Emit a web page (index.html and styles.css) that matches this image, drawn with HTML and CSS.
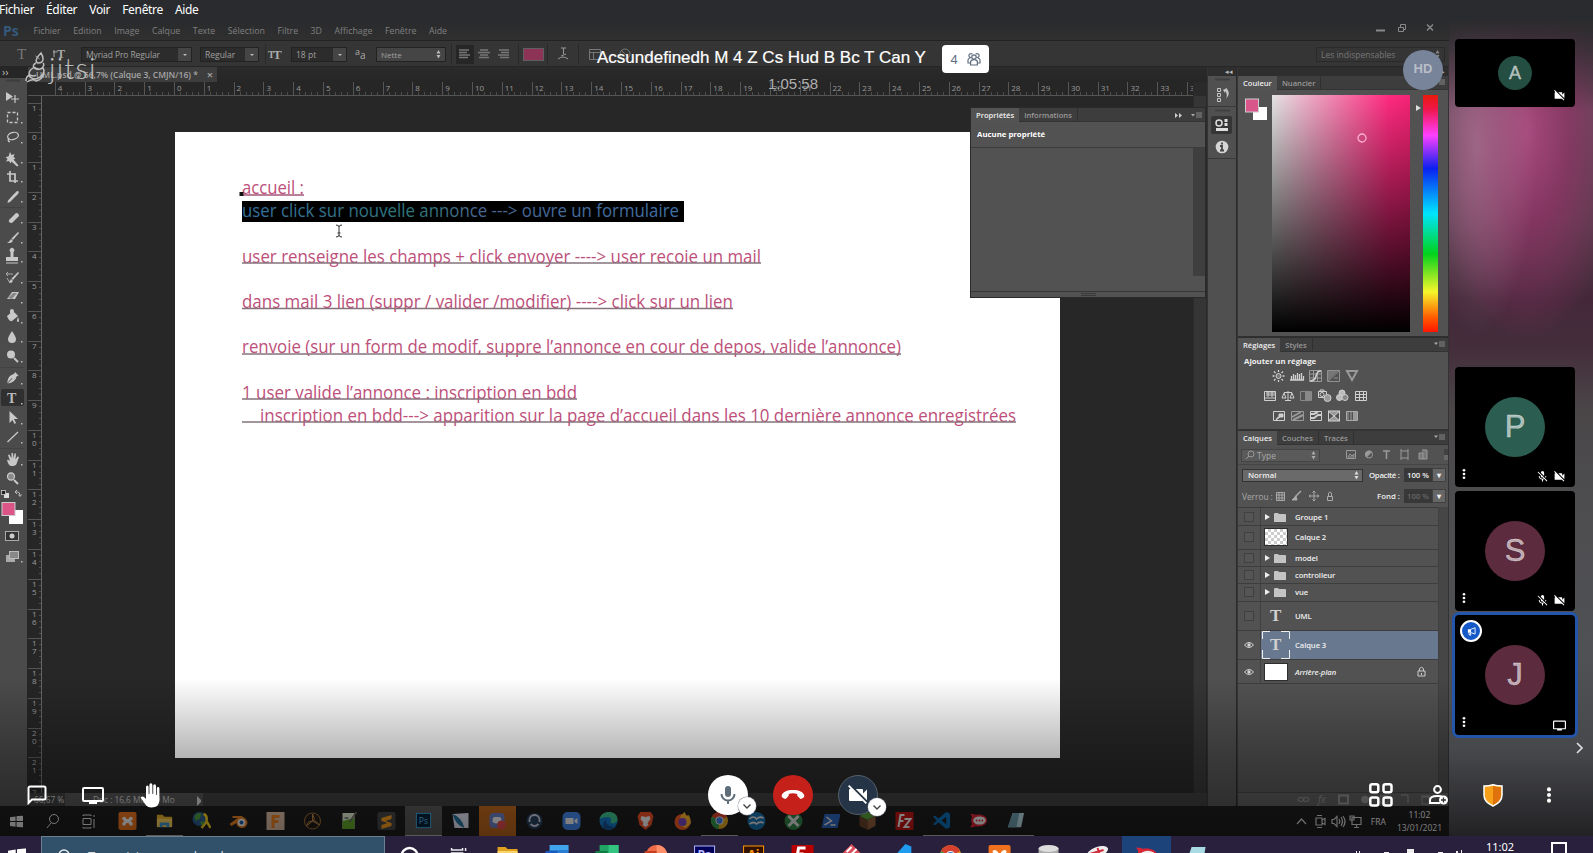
FILE: index.html
```html
<!DOCTYPE html>
<html lang="fr">
<head>
<meta charset="utf-8">
<title>Réunion</title>
<link rel="stylesheet" href="styles.css">
</head>
<body>
<svg class="defs" width="0" height="0">
  <symbol id="camoff" viewBox="0 0 24 24"><path d="M3.3 2 2 3.3 4.7 6H4a1 1 0 0 0-1 1v10a1 1 0 0 0 1 1h12c.2 0 .4-.1.500-.2l3.200 3.200 1.300-1.300zM21 6.500l-4 4V7a1 1 0 0 0-1-1H9.800L21 17.200z"/></symbol>
  <symbol id="micoff" viewBox="0 0 24 24"><path d="M19 11h-1.700c0 .7-.2 1.400-.4 2l1.200 1.200c.6-1 .9-2 .9-3.200zm-4 .2V5a3 3 0 0 0-6 0v.2zM4.300 3 3 4.300l6 6V11a3 3 0 0 0 3.700 2.900l1.600 1.600c-.7.400-1.500.6-2.300.6-2.800 0-5.300-2.100-5.300-5.100H5c0 3.400 2.700 6.200 6 6.700V21h2v-3.300c.9-.1 1.800-.4 2.500-.9l4.200 4.200 1.300-1.300z"/></symbol>
  <symbol id="dots" viewBox="0 0 24 24"><circle cx="12" cy="4.500" r="2.700"/><circle cx="12" cy="12" r="2.700"/><circle cx="12" cy="19.500" r="2.700"/></symbol>
  <symbol id="screen" viewBox="0 0 22 17"><path fill-rule="evenodd" d="M2 0h18a2 2 0 0 1 2 2v11a2 2 0 0 1-2 2h-5v2H7v-2H2a2 2 0 0 1-2-2V2a2 2 0 0 1 2-2zm0 2v11h18V2z"/></symbol>
  <symbol id="down" viewBox="0 0 18 18"><path d="M5.500 7.500 9 11l3.500-3.500" fill="none" stroke="#444" stroke-width="1.400"/></symbol>
  <symbol id="folder" viewBox="0 0 12 10"><path fill="#c4c4c4" d="M0 2a1 1 0 0 1 1-1h3l1 1h6a1 1 0 0 1 1 1v7H0z"/></symbol>
  <symbol id="win" viewBox="0 0 14 13"><path d="M0 2l6-1v5H0zM7 .8 14 0v6H7zM0 7h6v5.200L0 11.300zM7 7h7v6.200L7 12.200z"/></symbol>
  <symbol id="eye" viewBox="0 0 10 8"><path fill="none" stroke="#d5d5d5" d="M.5 4q4.500-5 9 0-4.500 5-9 0z"/><circle cx="5" cy="4" r="1.700" fill="#d5d5d5"/></symbol>
  <symbol id="menu" viewBox="0 0 11 7"><path d="M0 1.500h4L2 4z" fill="#aaa"/><path d="M5 1h6M5 3h6M5 5h6" stroke="#888"/></symbol>
  <symbol id="spin" viewBox="0 0 5 9"><path d="M2.500 0 4.500 3.500h-4zM2.500 8.500.5 5h4z"/></symbol>
  <symbol id="vsc" viewBox="0 0 20 20"><path fill="#0d6db5" d="M15 1l4 2v14l-4 2-8-7-4 3-2-1 4-4-4-4 2-1 4 3zM15 6l-5 4 5 4z"/></symbol>
  <symbol id="rocket" viewBox="0 0 20 20"><path fill="#d92536" d="M1 3c3 0 5 1 6 1 7-1 12 2 12 6s-5 7-12 6c-1 1-3 1-6 1 2-2 2-3 2-4-1-2-1-4 0-6 0-1 0-2-2-4z"/><ellipse cx="11" cy="10" rx="6.500" ry="4.300" fill="#eee"/><g fill="#d92536"><circle cx="8" cy="10" r="1"/><circle cx="11" cy="10" r="1"/><circle cx="14" cy="10" r="1"/></g></symbol>
  <symbol id="chrome" viewBox="0 0 20 20"><circle cx="10" cy="10" r="9" fill="#d9a322"/><path d="M10 10 2 6a9 9 0 0 1 16 0z" fill="#d6402f"/><path d="M10 10 2 6a9 9 0 0 0 7 13z" fill="#32964b"/><circle cx="10" cy="10" r="4.200" fill="#eee"/><circle cx="10" cy="10" r="3.300" fill="#3b7be0"/></symbol>
</svg>

<nav class="sysmenu"><span>Fichier</span><span>Éditer</span><span>Voir</span><span>Fenêtre</span><span>Aide</span></nav>

<main class="meeting">
<section class="share">
  <div class="ps-menu"><b>Ps</b><span>Fichier</span><span>Edition</span><span>Image</span><span>Calque</span><span>Texte</span><span>Sélection</span><span>Filtre</span><span>3D</span><span>Affichage</span><span>Fenêtre</span><span>Aide</span>
    <svg class="winbtns" width="76" height="14"><g fill="none" stroke="#888"><path d="M3 9.500h9" stroke-width="2"/><path d="M25.500 6.500h5v4h-5zM27.500 6V3.500h5v5H31"/><path d="M54 3.500l6 6M60 3.500l-6 6" stroke-width="1.500"/></g></svg>
  </div>
  <div class="ps-options">
    <svg class="ot" width="78" height="26"><g fill="#777" font-family="Liberation Serif, serif"><text x="17" y="18" font-size="15">T</text><text x="57" y="17" font-size="12" fill="#aaa" font-weight="bold">T</text></g><path d="M35.500 15l4 3M54 9v7m-1-5h4" stroke="#aaa"/></svg>
    <div class="field f1">Myriad Pro Regular<i></i></div>
    <div class="field f2">Regular<i></i></div>
    <svg width="32" height="26"><text x="9" y="17" font-size="10" fill="#aaa" font-weight="bold" font-family="Liberation Serif, serif">T</text><text x="14" y="18" font-size="13" fill="#aaa" font-weight="bold" font-family="Liberation Serif, serif">T</text><path d="M6.500 3v20" stroke="#2a2a2a"/></svg>
    <div class="field f3">18 pt<i></i></div>
    <svg width="29" height="26"><text x="8" y="14" font-size="9" fill="#aaa">a</text><text x="13" y="18" font-size="10" fill="#aaa">a</text></svg>
    <div class="field f4">Nette<svg width="5" height="9" fill="#bbb"><use href="#spin"/></svg></div>
    <svg class="aligns" width="270" height="26"><path d="M5.500 2v22M72.500 2v22M101.500 2v22M132.500 2v22" stroke="#292929"/><rect x="10" y="4" width="18" height="19" fill="#262626"/><g stroke="#777" stroke-width="1.300"><path d="M13 9h10M13 11.500h8M13 14h11M13 16.500h9M34 9h8M32 11.500h12M34 14h8M33 16.500h10M53 9h10M55 11.500h8M52 14h11M54 16.500h9"/></g><rect x="77.500" y="7.500" width="20" height="12" fill="#8d3355" stroke="#5f5f5f"/><g fill="none" stroke="#999"><path d="M112 18q5-4 10 0M115 7h5M117.500 7v6M115 15l5-2"/><path d="M143.500 8.500h11v10h-11zM143 11.500h12M147.500 11v7" stroke="#777"/><circle cx="179" cy="13" r="5" stroke="#777"/><path d="M175 9l8 8M198 14l3 3 6-8" stroke="#777"/></g></svg>
    <div class="field f5">Les indispensables<svg width="5" height="9" fill="#888"><use href="#spin"/></svg></div>
  </div>

  <div class="ps-main">
    <aside class="tools">
      <div class="grip">››</div>
      <svg width="27" height="493" viewBox="0 78 27 493">
        <path d="M6 80.500h14" stroke="#3d3d3d" stroke-width="2"/>
        <path d="M1 207.500h23M1 367.500h23M1 448.500h23" stroke="#424242"/>
        <rect x="1" y="389" width="23" height="17" rx="2" fill="#303030"/>
        <g fill="#c8c8c8">
          <path d="M6 92v9l7-4.500z"/><path d="M15 95v8M11 99h8" stroke="#c8c8c8" stroke-width="1.200"/>
          <path d="M10 152l1.500 3 3-1-1 3 2 1.500-2 1 5 6-1.500 1-5.500-5-1 2-1.500-2.500-3 .5 1.500-2.500-2-2 3-.5z"/>
          <path d="M17 191q3 0 1 3l-3 3-2-2zM13 195l2 2-5 5-2.500 1 .5-2.500z"/>
          <path d="M9 220l7-7q3 0 3 3l-7 7q-4 0-3-3z"/><path d="M18 232l1 1-6 7-1.500-1.500zM11 239l2 2q-2 3-6 1.500 2 0 4-3.500z"/>
          <path d="M10.500 252a2.300 2.300 0 1 1 3 0v5h4.500v4H6v-4h4.500zM6 262.500h12v1H6z"/>
          <path d="M18 272l1 1-6 7-1.500-1.500zM11 279l2 2q-2 3-4 1.500z"/><path d="M7 274h6M8 272l-2 2 2 2M7 278l3 5" stroke="#aaa" fill="none"/>
          <path d="M12 292h7l-4 7H7z"/><path d="M8 298l5-5 4 0-5 6z" fill="#888"/>
          <path d="M7 316l6-5 5 5-6 5q-3 1-5-5zM10 313v-2q0-2 2-2t2 3M18 317q2 5 0 5t0-5z"/>
          <path d="M12 331q4 6 4 8a4 4 0 0 1-8 0q0-2 4-8z"/>
          <circle cx="11" cy="354.500" r="4"/><path d="M14 358l4 4" stroke="#c8c8c8" stroke-width="2"/>
          <path d="M15 372l3.500 3.500-2 1q-1 6-9 7l5-5-.500-.500-5 5q1-8 7-9z"/>
          <path d="M9.500 411v12l3-3 2 4 1.500-1-2-4h4z"/>
          <path d="M7 460q1-1 3 1l-2-6 1.500-.500 2 4v-5.500h1.500l.5 5.500 1-5h1.500l-.5 6 2-3 1.500.500-2.500 7q-1 2-5 2-3 0-4.500-6z"/>
        </g>
        <g fill="none" stroke="#c8c8c8" stroke-width="1.300">
          <rect x="7.500" y="112.500" width="10" height="10" stroke-dasharray="3 2"/>
          <ellipse cx="13" cy="136" rx="5.500" ry="3.500" transform="rotate(-15 13 136)"/><path d="M9 138q-2 3 1 4"/>
          <path d="M10 171v10h8M7 174h8v9" stroke-width="1.700"/>
          <path d="M7.500 442L18 432"/>
          <circle cx="11" cy="476.500" r="3.500" fill="#888"/><path d="M14 480l4 4" stroke-width="2"/>
        </g>
        <text x="7" y="403" font-size="14" fill="#bbb" font-weight="bold" font-family="Liberation Serif, serif">T</text>
        <g fill="#bbb"><path d="M21 122h1.500v1.500H21zM21 142h1.500v1.500H21zM21 162h1.500v1.500H21zM21 181h1.500v1.500H21zM21 201h1.500v1.500H21zM21 222h1.500v1.500H21zM21 242h1.500v1.500H21zM21 261h1.500v1.500H21zM21 282h1.500v1.500H21zM21 302h1.500v1.500H21zM21 322h1.500v1.500H21zM21 341h1.500v1.500H21zM21 361h1.500v1.500H21zM21 383h1.500v1.500H21zM21 403h1.500v1.500H21zM21 423h1.500v1.500H21zM21 442h1.500v1.500H21zM21 464h1.500v1.500H21zM21 561h1.500v1.500H21z"/></g>
        <rect x="4" y="493" width="5" height="5" fill="#ddd"/><rect x="1.500" y="490.500" width="4" height="4" fill="#222" stroke="#ddd" stroke-width=".7"/><path d="M15 492h3q2 0 2 4M17 490l-2 2 2 2M18.500 494.500l1.500 2 1.500-2" fill="none" stroke="#bbb"/>
        <rect x="9" y="510" width="14" height="14" fill="#fff"/><rect x="2" y="502.500" width="13" height="13" fill="#dc5587" stroke="#ccc"/>
        <rect x="5.500" y="531.500" width="13" height="9" fill="#333" stroke="#aaa"/><circle cx="12" cy="536" r="2.500" fill="#ccc"/>
        <rect x="6" y="555" width="9" height="7" fill="#aaa"/><rect x="9.500" y="551.500" width="9" height="7" fill="#888" stroke="#bbb"/>
      </svg>
    </aside>

    <div class="doc">
      <div class="tabs"><div class="tab">UML.psd @ 66,7% (Calque 3, CMJN/16) * <em>×</em></div></div>
      <div class="hruler" id="hruler"></div>
      <div class="work">
        <div class="vruler" id="vruler"></div>
        <div class="canvas">
          <svg class="artboard" width="885" height="626" viewBox="175 132 885 626">
            <rect x="242" y="201" width="442" height="21" fill="#000"/>
            <defs><linearGradient id="inv" x1="0" x2="1"><stop offset="0" stop-color="#356f9e"/><stop offset=".4" stop-color="#2e7678"/><stop offset=".55" stop-color="#4a6690"/><stop offset="1" stop-color="#3f70a8"/></linearGradient></defs>
            <g class="copy">
              <text x="242" y="194" textLength="62" lengthAdjust="spacingAndGlyphs">accueil :</text>
              <text x="242" y="217" textLength="437" lengthAdjust="spacingAndGlyphs" fill="url(#inv)">user click sur nouvelle annonce ---&gt; ouvre un formulaire</text>
              <text x="242" y="262.500" textLength="519" lengthAdjust="spacingAndGlyphs">user renseigne les champs + click envoyer ----&gt; user recoie un mail</text>
              <text x="242" y="307.500" textLength="491" lengthAdjust="spacingAndGlyphs">dans mail 3 lien (suppr / valider /modifier) ----&gt; click sur un lien</text>
              <text x="242" y="353" textLength="659" lengthAdjust="spacingAndGlyphs">renvoie (sur un form de modif, suppre l’annonce en cour de depos, valide l’annonce)</text>
              <text x="242" y="398.500" textLength="335" lengthAdjust="spacingAndGlyphs">1 user valide l’annonce : inscription en bdd</text>
              <text x="260" y="421.500" textLength="756" lengthAdjust="spacingAndGlyphs">inscription en bdd---&gt; apparition sur la page d’accueil dans les 10 dernière annonce enregistrées</text>
            </g>
            <path d="M242 195h62" stroke="#a3557a" stroke-width="1.300"/>
            <path d="M242 263h519M242 308.500h491M242 354h659M242 399h335M242 422h774" stroke="#85737c" stroke-width="1.300"/>
            <rect x="239.500" y="192" width="4" height="4" fill="#111"/>
            <path d="M336 225q3 0 3 2 0-2 3-2M339 227v8M336 237q3 0 3-2 0 2 3 2M337.500 233h3" fill="none" stroke="#333"/>
          </svg>
          <div class="props">
            <div class="ptabs"><b>Propriétés</b><span>Informations</span><svg width="36" height="13"><path d="M5 4v5l3-2.500zM9 4v5l3-2.500z" fill="#ccc"/><path d="M21 5h4l-2 2.500z" fill="#aaa"/><path d="M26 4h6M26 6h6M26 8h6" stroke="#888"/></svg></div>
            <p>Aucune propriété</p>
            <div class="pbody"></div>
            <svg width="236" height="5"><path d="M110 1.500h15M110 3.500h15" stroke="#3a3a3a"/></svg>
          </div>
        </div>
        <div class="vscroll"></div>
      </div>
      <div class="status"><span>66,67 %</span><div>Doc : 16,6 Mo/2,9 Mo<i></i></div></div>
    </div>

    <div class="dock">
      <div class="strip">◂◂</div>
      <svg width="29" height="83" viewBox="0 0 29 83"><path d="M0 30.500h29M0 82.500h29" stroke="#383838"/><path d="M7 3.500h15M7 34.500h15" stroke="#404040" stroke-width="2"/><path d="M9.500 12.500h3v3h-3zM9.500 17.500h3v3h-3zM9.500 22.500h3v3h-3z" fill="none" stroke="#c5c5c5"/><path d="M15 14l4-2v1q4 4-1 10 2-5-1-8v2z" fill="#c5c5c5"/><rect x="3" y="40" width="21" height="18" rx="2" fill="#353535"/><circle cx="11" cy="47" r="3" fill="none" stroke="#ddd" stroke-width="1.500"/><path d="M16.500 43h3v3h-3zM16.500 47h3v3h-3zM8 52h12v3H8z" fill="#ddd"/><circle cx="14" cy="71" r="6.300" fill="#d5d5d5"/><path d="M14 66.500v2M12 70h2v4.500M12 74.500h4" stroke="#444" stroke-width="1.800" fill="none"/></svg>
    </div>

    <div class="panels">
      <div class="strip right">▸</div>
      <div class="ptabs"><b>Couleur</b><span>Nuancier</span><svg width="11" height="7"><use href="#menu"/></svg></div>
      <div class="color">
        <svg width="22" height="24"><rect x="8" y="10" width="14" height="13" fill="#fff"/><rect x=".5" y="2" width="13" height="13" fill="#d9568a" stroke="#ccc"/></svg>
        <div class="picker"><svg width="10" height="10"><circle cx="5" cy="5" r="4" fill="none" stroke="#ffb0d0" stroke-width="1.300"/></svg></div>
        <svg class="marker" width="5" height="8"><path d="M0 1v6l5-3z" fill="#ddd"/></svg>
        <div class="hue"></div>
      </div>
      <div class="ptabs"><b>Réglages</b><span>Styles</span><svg width="11" height="7"><use href="#menu"/></svg></div>
      <div class="adjust"><b>Ajouter un réglage</b>
        <svg width="100" height="62" viewBox="1263 365 100 62">
          <g stroke="#d0d0d0" fill="none">
            <circle cx="1278.500" cy="376" r="2.500" fill="#777"/><path d="M1278.500 370v2M1278.500 380v2M1272.500 376h2M1282.500 376h2M1274 371.500l1.500 1.500M1283 371.500l-1.500 1.500M1274 380.500l1.500-1.500M1283 380.500l-1.500-1.500" stroke-width="1.300"/>
            <path d="M1291.500 380v-4M1293.500 380v-6M1295.500 380v-5M1297.500 380v-7M1299.500 380v-6M1301.500 380v-7M1303.500 380v-4M1290 380h14" stroke-width="1.300"/>
            <path d="M1309.500 370.500h12v11h-12zM1310 374h11M1310 378h11M1313.500 371v10M1317.500 371v10" stroke="#999"/><path d="M1310 381q5 0 6-5t5-5" stroke-width="1.500"/>
            <path d="M1327.500 370.500h12v11h-12zM1328 381l11-10M1329 374h4M1334 378h4" stroke="#909090"/><path d="M1328 371h10l-10 9z" fill="#777" stroke="none"/>
            <path d="M1347 371h10l-5 9z" stroke="#999" stroke-width="2"/>
            <path d="M1264.500 391.500h11v9h-11zM1264 398h12M1268 391v6M1272 391v6M1266 393h9M1266 395h9"/>
            <path d="M1288 391v9M1284 392.500h8M1284 393l-2 5h4zM1292 393l-2 5h4zM1285 400.500h6"/>
            <path d="M1300.500 391.500h11v9h-11z" stroke="#888"/><path d="M1308 392v8" stroke="#888" stroke-width="6"/>
            <path d="M1318.500 391.500h8v6h-8zM1320 391v-1h4v1"/><circle cx="1322" cy="394.500" r="2"/><circle cx="1327.500" cy="398" r="3.500" fill="#999"/>
            <circle cx="1342" cy="393" r="3" fill="#bbb"/><circle cx="1339.500" cy="397.500" r="3" fill="#bbb"/><circle cx="1345" cy="397.500" r="3" fill="#888"/>
            <path d="M1355.500 391.500h11v9h-11zM1355 394.500h12M1355 397.500h12M1359.500 391v10M1363.500 391v10"/>
            <path d="M1273.500 411.500h11v9h-11z"/><path d="M1276 420q1-3 3-3v-3h4v3h-3z" fill="#ccc"/>
            <path d="M1291.500 411.500h12v9h-12z" stroke="#999"/><path d="M1292 417l9-5M1293 420l10-5" stroke="#999" stroke-width="2"/>
            <path d="M1310.500 411.500h11v9h-11z"/><path d="M1311 418h3l4-3h3M1311 414h3l4-2" stroke-width="2"/>
            <path d="M1328.500 411.500h11v9h-11z"/><path d="M1328 411l6 5 6-5zM1328 421l6-5 6 5z" fill="#999"/><path d="M1346.500 411.500h11v9h-11z" stroke="#aaa"/><path d="M1348 412v8M1351 412v8" stroke-width="2" stroke="#777"/><path d="M1355 412v8" stroke-width="4" stroke="#999"/>
          </g>
        </svg>
      </div>
      <div class="ptabs"><b>Calques</b><span>Couches</span><span>Tracés</span><svg width="11" height="7"><use href="#menu"/></svg></div>
      <div class="filter"><div class="type"><svg width="10" height="10"><circle cx="6" cy="4" r="3" fill="none" stroke="#999"/><path d="M4 6L1 9" stroke="#999"/></svg>Type<svg class="sp" width="5" height="9" fill="#aaa"><use href="#spin"/></svg></div>
        <svg width="102" height="14" viewBox="0 0 110 14" preserveAspectRatio="xMinYMid slice"><g fill="none" stroke="#9a9a9a"><path d="M.5 2.500h9v8h-9zM2 9l2-3 2 2 2-2v3z"/><circle cx="23" cy="6.500" r="3.500"/><path d="M23 3a3.500 3.500 0 0 0-2.500 6L25.500 4q-1-1-2.500-1z" fill="#9a9a9a"/><path d="M37 3h7M40.500 3v8" stroke-width="1.500"/><path d="M55 3h7v7h-7zM54 2h2M54 11h2M61 2h2M61 11h2"/><path d="M73 5h4v6h-4zM76 2h5v9h-4" fill="#777"/></g><rect x="98" y="1" width="4" height="7" fill="#414141"/><rect x="98" y="7" width="4" height="5" fill="#686868"/></svg></div>
      <div class="blend"><div class="sel">Normal<svg class="sp" width="5" height="9" fill="#ddd"><use href="#spin"/></svg></div><span>Opacité :</span><em>100 %</em><i>▾</i></div>
      <div class="lock"><span>Verrou :</span>
        <svg width="60" height="12"><g fill="none" stroke="#aaa"><path d="M3.500 2.500h8v8h-8zM6 2v8M9 2v8M4 5h7M4 8h7"/><path d="M28 1l-6 6" stroke-width="1.500"/><path d="M19 10h5l-1-4z" fill="#aaa"/><path d="M41 1v10M36 6h10M39.500 2.500L41 1l1.500 1.500M39.500 9.500L41 11l1.500-1.500M37.500 4.500L36 6l1.500 1.500M44.500 4.500L46 6l-1.500 1.500"/><path d="M54.500 6.500h5v4h-5zM55.500 6V3q1.500-2 3 0v3"/></g></svg>
        <span class="fond">Fond :</span><em class="dim">100 %</em><i>▾</i></div>
      <div class="layerbox">
        <div class="layers">
          <div class="layer h18"><s></s><div><q></q><svg width="12" height="10"><use href="#folder"/></svg><span>Groupe 1</span></div></div>
          <div class="layer h23"><s></s><div><div class="thumb checker"></div><span>Calque 2</span></div></div>
          <div class="layer h17"><s></s><div><q></q><svg width="12" height="10"><use href="#folder"/></svg><span>model</span></div></div>
          <div class="layer h17"><s></s><div><q></q><svg width="12" height="10"><use href="#folder"/></svg><span>controlleur</span></div></div>
          <div class="layer h17"><s></s><div><q></q><svg width="12" height="10"><use href="#folder"/></svg><span>vue</span></div></div>
          <div class="layer h29"><s></s><div><strong>T</strong><span>UML</span></div></div>
          <div class="layer h29 on"><svg width="10" height="8"><use href="#eye"/></svg><div><strong class="framed">T<svg width="28" height="28"><path d="M.5 8V.5H8M19 .5h8.500V8M27.500 19v8.500H19M8 27.500H.5V19" fill="none" stroke="#eee"/></svg></strong><span>Calque 3</span></div></div>
          <div class="layer h23"><svg width="10" height="8"><use href="#eye"/></svg><div><div class="thumb"></div><span class="it">Arrière-plan</span><svg class="padlock" width="9" height="11"><path d="M1 5h7v5H1zM2.500 5V2.500q2-2.500 4 0V5M4.500 7v2" fill="none" stroke="#ccc"/></svg></div></div>
        </div>
        <div class="lscroll"></div>
      </div>
      <div class="pfoot"><svg width="150" height="13"><g fill="none" stroke="#8a8a8a"><ellipse cx="5" cy="6.500" rx="3" ry="2"/><ellipse cx="10" cy="6.500" rx="3" ry="2"/><path d="M43 2.500h9v8h-9z" stroke-width="2"/><circle cx="69" cy="6.500" r="3.500" fill="#8a8a8a"/><path d="M84 3h8v7h-8zM105 2h7v8M126 4h7v7h-7zM125 3h9"/></g><text x="22" y="10" font-size="10" font-style="italic" fill="#8a8a8a">fx</text></svg></div>
    </div>
  </div>

  <div class="taskbar-in">
    <svg class="sys" width="108" height="30"><g fill="#ddd"><svg x="10" y="9" width="13" height="13" viewBox="0 0 14 13"><use href="#win"/></svg></g><g fill="none" stroke="#ddd"><circle cx="54" cy="13" r="4.500"/><path d="M51 17l-4 5M83 10v-1h8v1M83 12.500h8v6h-8zM83 21v1h8v-1M94 9v2M94 13v9"/></g></svg>
    <div class="apps">
      <svg viewBox="0 0 20 20"><rect x="1" y="1" width="18" height="18" rx="2" fill="#e5701c"/><path d="M5 6.500q2.500-2 4 1.500h2q1.500-3.500 4-1.500 1 2-2 3.500 3 2 2 4-2.500 2-4-2H9q-1.500 4-4 2-1-2 2-4-3-1.500-2-3.500z" fill="#eee"/></svg>
      <svg class="run" viewBox="0 0 20 20"><path d="M2 4h6l2 2h8v10H2z" fill="#e0a928"/><path d="M2 8h16v9H2z" fill="#f3cd57"/><path d="M5 17v-5h10v5h-3v-2H8v2z" fill="#3c92c8"/></svg>
      <svg viewBox="0 0 20 20"><circle cx="8" cy="8" r="7" fill="#2b5c8f"/><path d="M3 5q4-5 7-2l-2 5-4 2zM8 11l5-1-2 5z" fill="#4d9b3b"/><path d="M12 3q4 1 3 7l4 7M15 11l-5 6" fill="none" stroke="#eccb21" stroke-width="2.500"/></svg>
      <svg viewBox="0 0 20 20"><path d="M1 13l8-6H4V5h9q6 3 6 7-1 5-6 5-5-1-5-5l-5 3z" fill="#e57e20"/><circle cx="13" cy="11.500" r="3.800" fill="#eee"/><circle cx="13" cy="11.500" r="2" fill="#245ca0"/></svg>
      <svg viewBox="0 0 20 20"><rect x="1" y="1" width="18" height="18" fill="#d5b7a0"/><path d="M6 4h8v3H9v2h4v3H9v5H6z" fill="#e57d1d"/></svg>
      <svg viewBox="0 0 20 20"><circle cx="10" cy="10" r="8" fill="#221b16" stroke="#a37239"/><path d="M10 10V3l2 5zM10 10l-6 5 2-4zM10 10l7 4-4-4z" stroke="#b98546" fill="none"/></svg>
      <svg viewBox="0 0 20 20"><path d="M3 2h12v16H3z" fill="#dbe8cf"/><path d="M3 10l12-3v11H3z" fill="#62a52a"/><path d="M5 7h4M17 1l-7 10" stroke="#666" stroke-width="1.500"/></svg>
      <svg viewBox="0 0 20 20"><rect x="1" y="1" width="18" height="18" rx="2" fill="#444"/><path d="M5 7l10-3v4l-6 2 6 2v3L5 18v-4l6-2-6-2z" fill="#f39a1e"/></svg>
      <svg class="run act" viewBox="0 0 20 20"><rect x="2.500" y="2.500" width="15" height="15" fill="#062338" stroke="#3aa6de"/><text x="5" y="14" font-size="9" fill="#53b8ee" font-family="Open Sans, sans-serif">Ps</text></svg>
      <svg viewBox="0 0 20 20"><path d="M2 3l16-1v15H4z" fill="#dde"/><path d="M2 3q9 3 12 14Q5 14 2 3z" fill="#20709a"/></svg>
      <svg class="orange" viewBox="0 0 20 20"><rect x="2" y="2" width="15" height="15" rx="4" fill="#6a7ec4"/><path d="M5 11q0-5 2-5h5q2 0 2 5-4 3-9 0z" fill="#eee"/><circle cx="14" cy="14" r="4.500" fill="#e04a4a"/></svg>
      <svg viewBox="0 0 20 20"><circle cx="10" cy="10" r="8" fill="#263f5c"/><path d="M5 11V9a5 5 0 0 1 10 0v2M6 13q4 4 8 0" fill="none" stroke="#ccd" stroke-width="1.800"/></svg>
      <svg viewBox="0 0 20 20"><rect x="1" y="1" width="18" height="18" rx="5" fill="#4285e8"/><path d="M4 7h8v6H4zM13 9l3-2v6l-3-2z" fill="#eee"/></svg>
      <svg viewBox="0 0 20 20"><circle cx="10" cy="10" r="9" fill="#1578c4"/><path d="M1 8C3-2 20-1 19 9q-1 4-7 3 2-6-3-6-5 0-8 2z" fill="#3cc08b"/><path d="M8 7q-3 8 8 9-9 6-12-2z" fill="#164f90"/></svg>
      <svg viewBox="0 0 20 20"><path d="M5 1h10l3 4-2 9-6 5-6-5L2 5z" fill="#ea4d25"/><path d="M6 5l4 1 4-1 1 3-3 4 1 2-3 2-3-2 1-2-3-4z" fill="#eee"/></svg>
      <svg viewBox="0 0 20 20"><circle cx="10" cy="11" r="8" fill="#ef5b23"/><path d="M8 5l4-4 2 4 2-1q3 4 2 9l-5 4-6-3z" fill="#f7ae2b"/><circle cx="10" cy="11" r="4" fill="#7443bd"/></svg>
      <svg class="run" viewBox="0 0 20 20"><use href="#chrome"/></svg>
      <svg viewBox="0 0 20 20"><circle cx="10" cy="10" r="9" fill="#1770aa"/><path d="M3 8q4-4 7 0 3-3 7-1M3 13q4-3 7 0 3-3 7-1" stroke="#ddd" fill="none" stroke-width="1.700"/></svg>
      <svg viewBox="0 0 20 20"><circle cx="10" cy="10" r="9" fill="#318348"/><path d="M5 5l10 10M15 5L5 15" stroke="#ddd" stroke-width="3"/></svg>
      <svg viewBox="0 0 20 20"><path d="M4 3h16l-3 14H1z" fill="#2c63b8"/><path d="M6 6l5 4-7 4M10 14h5" fill="none" stroke="#ddd" stroke-width="1.500"/></svg>
      <svg viewBox="0 0 20 20"><path d="M2 5l8-4 8 4-8 4z" fill="#559c36"/><path d="M2 5v10l8 4V9z" fill="#684229"/><path d="M18 5v10l-8 4V9z" fill="#8c5d3c"/></svg>
      <svg viewBox="0 0 20 20"><rect x="1" y="1" width="18" height="18" fill="#bf1414"/><path d="M10 4H6L4 16M5 10h4M10 8h6l-6 8h5" fill="none" stroke="#eee" stroke-width="2"/></svg>
      <svg class="run" viewBox="0 0 20 20"><use href="#vsc"/></svg>
      <svg class="run" viewBox="0 0 20 20"><use href="#rocket"/></svg>
      <svg class="run" viewBox="0 0 20 20"><path d="M7 2h12l-3 15H2z" fill="#b4d6de"/><path d="M7 2h7l-3 15H2z" fill="#6b9aa8"/></svg>
    </div>
    <div class="tray"><svg width="66" height="30"><g fill="none" stroke="#ccc" stroke-width="1.200"><path d="M1 18l4.500-5 4.500 5M20 12h6v7h-6zM26 14l3-1.500v6L26 17M21 9.500h5M21 21.500h5M36 13.500h2l3-3v10l-3-3h-2zM43 13q1.500 2 0 5M45 11q3 4.500 0 9M47 10q4 5.500 0 11M56 11.500h9v7h-9zM58 21.500h5M60.500 19v2M54 10h4v4h-4z"/></g></svg><span>FRA</span><p>11:02<br>13/01/2021</p></div>
  </div>
  <div class="shade"></div>
</section>

<aside class="filmstrip">
  <div class="tile small"><div class="av green">A</div><div class="badges"><svg width="13" height="13"><use href="#camoff"/></svg></div></div>
  <div class="tiles">
    <div class="tile"><div class="av green">P</div><svg class="more" width="12" height="12"><use href="#dots"/></svg><div class="badges"><svg width="13" height="13"><use href="#micoff"/></svg><svg width="13" height="13"><use href="#camoff"/></svg></div></div>
    <div class="tile"><div class="av plum">S</div><svg class="more" width="12" height="12"><use href="#dots"/></svg><div class="badges"><svg width="13" height="13"><use href="#micoff"/></svg><svg width="13" height="13"><use href="#camoff"/></svg></div></div>
    <div class="tile active"><div class="av plum">J</div><div class="speaker"><svg width="10" height="10" viewBox="0 0 10 10"><path d="M1 2.500h3.500v3.800H1z" fill="#fff"/><path d="M4.500 2.500 9 .8v7L4.500 6.300M2 6.300 2.700 9h1.600l-.7-2.700" fill="none" stroke="#fff"/></svg></div><svg class="more" width="12" height="12"><use href="#dots"/></svg><div class="badges"><svg width="13" height="11"><use href="#screen"/></svg></div></div>
  </div>
  <svg class="next" width="9" height="12"><path d="M2 1l5 5-5 5" fill="none" stroke="#ddd" stroke-width="1.700"/></svg>
</aside>

<div class="watermark">
  <svg width="24" height="34" viewBox="0 0 24 34"><g fill="none" stroke="#bdbdbd" stroke-width="1.500"><path d="M16 2q-3 3-4 5-2 4 1 5 5 0 5-4 0-3-2-6zM11 12q-4 2-2 5 4 3 8 0 3-3 1-5M8 17q-6 4-3 9 5 4 10 0 6-5 3-9M1 30q0-5 4-6 4 2 6 0M2 31q6-4 9-1 6-1 8-8M9 16q5 4 9 1"/></g></svg>
  <span>jitsi</span>
</div>
<div class="subject"><div><h1>Acsundefinedh M 4 Z Cs Hud B Bc T Can Y</h1><time>1:05:58</time></div><div class="count">4<svg width="14" height="14" viewBox="0 0 14 14"><g fill="none" stroke="#5e6d7f" stroke-width="1.200"><circle cx="7" cy="5" r="2.200"/><path d="M3.600 13V10q0-2.300 3.400-2.300t3.400 2.300v3zM4.500 5.500a2 2 0 1 1 .8-3.300M9.500 5.500a2 2 0 1 0-.8-3.300M3.500 11H1V8q0-1.500 2-2M10.500 11H13V8q0-1.500-2-2"/></g></svg></div></div>
<div class="self">HD</div>

<div class="toolbox">
  <div class="group left">
    <svg width="20" height="20"><path d="M1.500 18V3a1.500 1.500 0 0 1 1.500-1.500h14A1.500 1.500 0 0 1 18.500 3v10a1.500 1.500 0 0 1-1.500 1.500H5z" fill="none" stroke="#fff" stroke-width="2"/></svg>
    <svg width="22" height="17" fill="#fff"><use href="#screen"/></svg>
    <svg class="hand" width="23" height="25" viewBox="0 0 23 25"><path fill="#fff" d="M6 14V4q0-1.500 1.300-1.500T8.600 4v7h.800V2q0-1.800 1.500-1.800T12.400 2v9h.8V2.700q0-1.500 1.400-1.500T16 2.700V12h.8V5.500q0-1.400 1.300-1.400t1.300 1.400V17q0 7.500-8 7.500-4 0-6-3L.5 14.600q1.500-1.800 3.500-.6L6 16z"/></svg>
  </div>
  <div class="group mid">
    <div class="btn white"><svg width="16" height="20" viewBox="0 0 16 20"><rect x="5" y="1" width="6" height="11" rx="3" fill="#5e6d7a"/><path d="M1.500 9a6.500 6.500 0 0 0 13 0M8 15.500V19" fill="none" stroke="#5e6d7a" stroke-width="2"/></svg><svg class="chev" width="18" height="18"><use href="#down"/></svg></div>
    <div class="btn red"><svg width="24" height="12" viewBox="0 0 24 12"><path fill="#fff" d="M12 1C6 1 1.500 3 .7 6.500q-.2 1.500.9 2.300l2 1q1 .3 1.700-.5l2-2q.5-.6.400-1.300v-1q4-1.500 8.500 0v1q0 .7.500 1.300l2 2q.7.800 1.700.5l2-1q1-.8.900-2.300C22.500 3 18 1 12 1z"/></svg></div>
    <div class="btn dark"><svg width="24" height="24" fill="#fff"><use href="#camoff"/></svg><svg class="chev" width="18" height="18"><use href="#down"/></svg></div>
  </div>
  <div class="group end">
    <svg width="24" height="24"><g fill="none" stroke="#fff" stroke-width="2.500"><rect x="1.300" y="1.300" width="8" height="8" rx="2"/><rect x="14.500" y="1.300" width="8" height="8" rx="2"/><rect x="1.300" y="14.500" width="8" height="8" rx="2"/><rect x="14.500" y="14.500" width="8" height="8" rx="2"/></g></svg>
    <svg width="20" height="20"><circle cx="8.500" cy="4.500" r="3.400" fill="none" stroke="#fff" stroke-width="2"/><path d="M11 18H1v-3q0-4 7.500-4 4 0 5 1" fill="none" stroke="#fff" stroke-width="2"/><circle cx="14.500" cy="15" r="4.500" fill="#fff"/><path d="M14.500 12.500v5M12 15h5" stroke="#333" stroke-width="1.300"/></svg>
    <svg class="shield" width="20" height="23" viewBox="0 0 20 23"><path d="M1 2q5 0 9-1.300Q14 2 19 2v9q0 7-9 11Q1 18 1 11z" fill="#f9a01b" stroke="#fff" stroke-width="1.500"/><path d="M10 2q4 1 8 1v8q0 6-8 10z" fill="#e0720c"/></svg>
    <svg width="18" height="18" fill="#fff"><use href="#dots"/></svg>
  </div>
</div>
</main>

<footer class="taskbar">
  <div class="start"><svg width="18" height="17" viewBox="0 0 14 13" fill="#fff"><use href="#win"/></svg></div>
  <div class="search"><svg width="14" height="14"><circle cx="7" cy="7" r="5" fill="none" stroke="#eee" stroke-width="1.500"/></svg>Taper ici pour rechercher</div>
  <div class="icons">
    <svg viewBox="0 0 24 24"><circle cx="12" cy="12" r="8" fill="none" stroke="#fff" stroke-width="2.500"/></svg>
    <svg viewBox="0 0 24 24"><path d="M5 4v2h11V4M5 9h11v8H5zM19 4v3M19 9v8" fill="none" stroke="#eee" stroke-width="1.500"/></svg>
    <svg viewBox="0 0 24 24"><path d="M2 3h8l2 2h10v18H2z" fill="#e0a020"/><path d="M2 7h20v16H2z" fill="#fad46a"/></svg>
    <svg viewBox="0 0 24 24"><path d="M5 1h19v6H5z" fill="#41a5ee"/><path d="M5 6h19v16H5z" fill="#2b7cd3"/><path d="M1 7h12v12H1z" fill="#185abd"/></svg>
    <svg viewBox="0 0 24 24"><path d="M5 1h19v10H5z" fill="#21a366"/><path d="M14 1h10v9H14z" fill="#33c481"/><path d="M1 7h12v12H1z" fill="#107c41"/></svg>
    <svg viewBox="0 0 24 24"><circle cx="13" cy="12" r="11" fill="#ed6c47"/><path d="M13 1a11 11 0 0 1 11 11H13z" fill="#ff8f6b"/><path d="M1 7h12v12H1z" fill="#c43e1c"/></svg>
    <svg viewBox="0 0 24 24"><rect x="2" y="2" width="20" height="20" fill="#00005b" stroke="#b3b8ff"/><text x="5" y="15" font-size="12" fill="#b3b8ff" font-weight="bold" font-family="Open Sans, sans-serif">Ps</text></svg>
    <svg viewBox="0 0 24 24"><rect x="2" y="2" width="20" height="20" fill="#310" stroke="#ff9a00"/><text x="6" y="15" font-size="12" fill="#ff9a00" font-weight="bold" font-family="Open Sans, sans-serif">Ai</text></svg>
    <svg viewBox="0 0 24 24"><path d="M1 1h22v22H1z" fill="#b00"/><path d="M15 4H8L5 20M7 10h6" fill="none" stroke="#fff" stroke-width="3"/></svg>
    <svg viewBox="0 0 24 24"><path d="M12 0l10 10-10 10L2 10z" fill="#dd4c5b"/><path d="M7 8l5-5M12 10l5-5M4 12l6 6" stroke="#fff" stroke-width="2"/></svg>
    <svg viewBox="0 0 20 20"><path fill="#1f9cf0" d="M14 0l5 2v16l-5 2-8-8-4 3-1-1 4-4z"/></svg>
    <svg viewBox="0 0 20 20"><use href="#chrome"/></svg>
    <svg viewBox="0 0 24 24"><rect x="1" y="1" width="22" height="22" rx="2" fill="#f0711e"/><path d="M5 7q3-3 6 2h2q3-5 6-2 0 3-3 4H8Q5 10 5 7z" fill="#fff"/></svg>
    <svg viewBox="0 0 24 24"><path d="M2 4v18h20V4z" fill="#aaa"/><ellipse cx="12" cy="4.500" rx="10" ry="3.500" fill="#ddd"/></svg>
    <svg viewBox="0 0 24 24"><ellipse cx="12" cy="8" rx="11" ry="5" transform="rotate(-20 12 8)" fill="#eee"/><path d="M4 10l14-4M12 4l2 6" stroke="#d22a3a" stroke-width="2"/></svg>
    <svg class="cur" viewBox="0 0 20 20"><use href="#rocket"/></svg>
    <svg viewBox="0 0 24 24"><path d="M8 3h14l-3 18H2z" fill="#a9dbe4"/></svg>
  </div>
  <div class="tray2"><svg width="110" height="17"><g fill="#eee"><path d="M2 15h1v2H2zM5 15h1v2H5zM30 16h5v1h-5zM53 13h7v4h-7zM84 16h5v1h-5zM102 15h2v2h-2zM107 14h1v3h-1z"/></g></svg><span>11:02</span><svg width="17" height="12"><path d="M1 12V2h14v10" fill="none" stroke="#fff" stroke-width="2"/></svg></div>
</footer>
<script src="rulers.js"></script>
</body>
</html>
```

FILE: rulers.js
```js
// Numbers the horizontal and vertical rulers outwards from the document origin.
function fill(id, from, to) {
  const ruler = document.getElementById(id);
  for (let n = from; n <= to; n++) {
    const cell = document.createElement('span');
    cell.textContent = Math.abs(n);
    ruler.append(cell);
  }
}
fill('hruler', -4, 34);
fill('vruler', -1, 22);
```

FILE: styles.css
```css
* { box-sizing: border-box; }
body { margin: 0; width: 1593px; height: 853px; overflow: hidden; display: flex; flex-direction: column; background: #292b2f; color: #bbb; font: 9px "Open Sans", "Noto Sans", sans-serif; }
svg { display: block; flex: none; }
p, h1 { margin: 0; }
i, em, s, q { font-style: normal; text-decoration: none; quotes: none; }
q::before, q::after { content: none; }
.defs { position: absolute; }

.sysmenu { height: 20px; flex: none; display: flex; gap: 12px; font-size: 12px; letter-spacing: -.33px; line-height: 20px; color: #fff; font-family: "Noto Sans", sans-serif; }
.sysmenu span:first-child { margin-left: -1px; }
.meeting { position: relative; height: 816px; flex: none; display: flex; }
.share { position: relative; width: 1449px; flex: none; display: flex; flex-direction: column; }

.ps-menu { height: 21px; display: flex; gap: 12.500px; padding-left: 3px; line-height: 22px; font-size: 8.800px; color: #808080; background: linear-gradient(#292a2d, #303030); border-bottom: 1px solid #222; }
.ps-menu b { font-size: 14px; color: #35597c; line-height: 21px; width: 18px; }
.winbtns { margin: 1px 0 0 auto; }
.ps-options { height: 26px; display: flex; align-items: center; padding-top: 1px; background: #353535; border-bottom: 1px solid #262626; }
.field { height: 15px; flex: none; border: 1px solid #222; background: #2c2c2c; color: #a0a0a0; display: flex; justify-content: space-between; line-height: 13px; padding-left: 4px; font-size: 8.500px; }
.field i { width: 13px; background: #454545; }
.field i::before { content: ""; display: block; margin: 6px auto 0; width: 0; border: 2.500px solid transparent; border-top-color: #bbb; }
.field svg { margin: 2px 4px 0 0; }
.f1 { width: 111px; margin-left: 3px; letter-spacing: -.1px; } .f2 { width: 59px; margin-left: 8px; } .f3 { width: 56px; } .f4 { width: 70px; background: #454545; font-size: 8px; } .f5 { width: 129px; margin: 0 4px 0 auto; color: #777; background: #353535; border-color: #2a2a2a; }

.ps-main { height: 739px; display: flex; background: #292929; }
.tools { width: 27px; flex: none; background: #4b4b4b; }
.grip { height: 11px; background: #262626; color: #bbb; line-height: 9px; font-size: 11px; padding-left: 2px; }
.doc { width: 1180px; flex: none; display: flex; flex-direction: column; background: #2a2a2a; border-left: 1px solid #262626; }
.tabs { height: 15px; display: flex; background: linear-gradient(#2b2b2b, #262626); }
.tab { width: 189px; background: #3d3d3d; color: #a5a5a5; font-weight: 600; font-size: 8.500px; line-height: 16px; padding: 0 4px 0 8px; white-space: nowrap; display: flex; justify-content: space-between; }
.tab em { font-size: 11px; }
.hruler, .vruler { overflow: hidden; color: #9a9a9a; font-size: 8px; background: #262626; flex: none; }
.hruler { height: 14px; display: flex; padding-left: 26.800px; margin-right: 14px; border-bottom: 1px solid #555; }
.hruler span { width: 29.800px; flex: none; border-left: 1px solid #555; padding-left: 2px; line-height: 11px; background: repeating-linear-gradient(90deg, transparent 0 4.960px, #4c4c4c 4.960px 5.960px) 0 100% / 100% 3px no-repeat; }
.work { height: 697px; flex: none; display: flex; }
.vruler { width: 14px; padding-top: 6.500px; border-right: 1px solid #666; display: flex; flex-direction: column; }
.vruler span { height: 29.770px; flex: none; border-top: 1px solid #555; width: 14px; padding: 0 6px 0 4px; line-height: 8px; word-break: break-all; background: repeating-linear-gradient(transparent 0 4.960px, #4c4c4c 4.960px 5.960px) 100% 0 / 3px 100% no-repeat; }
.canvas { position: relative; width: 1151px; flex: none; background: #272727; }
.artboard { margin: 36px 0 0 133px; background: #fff; }
.copy { font: 17.600px "Open Sans", "Noto Sans", sans-serif; fill: #bd4f7a; }
.vscroll { width: 14px; background: #353535; border-left: 1px solid #2c2c2c; border-right: 1px solid #2a2a2a; }
.status { height: 13px; display: flex; line-height: 14px; padding-left: 6px; font-size: 8.300px; background: #3c3c3c; color: #c8c8c8; }
.status span { width: 31px; white-space: nowrap; }
.status div { width: 138px; padding-left: 28px; background: #505050; display: flex; justify-content: space-between; white-space: nowrap; }
.status i { border: 4px solid transparent; border-left-color: #ccc; margin: 3px -2px 0 0; }

.props { position: absolute; left: 928px; top: 11px; width: 236px; height: 191px; background: #525252; border: 1px solid #2a2a2a; }
.ptabs { height: 14px; flex: none; display: flex; background: #3d3d3d; color: #999; line-height: 14px; font-weight: 600; font-size: 7.600px; border-bottom: 1px solid #333; }
.ptabs b { color: #eee; background: #535353; padding: 0 5px; height: 14px; font-weight: 600; }
.ptabs span { padding: 0 5px; border-right: 1px solid #303030; }
.ptabs svg { margin: 3px 3px 0 auto; }
.props .ptabs svg { margin: 1px -1px 0 auto; }
.props p { color: #fff; font-weight: 700; padding: 6px 6px 0; height: 26px; line-height: 13px; font-size: 7.800px; border-bottom: 1px solid #3d3d3d; }
.pbody { height: 144px; border-bottom: 1px solid #363636; background: linear-gradient(#3f3f3f, #3f3f3f) 100% 0 / 12px 128px no-repeat; }

.dock { width: 30px; background: #505050; border-left: 1px solid #333; border-right: 1px solid #2a2a2a; flex: none; }
.strip { height: 9px; background: #2e2e2e; color: #bbb; font-size: 7px; line-height: 9px; text-align: right; padding-right: 3px; flex: none; }
.panels { width: 212px; flex: none; display: flex; flex-direction: column; background: #525252; border-right: 1px solid #333; border-left: 1px solid #383838; }
.color { height: 248px; display: flex; padding: 5px 0 0 7px; border-bottom: 2px solid #2e2e2e; align-items: flex-start; flex: none; }
.color > svg:first-child { margin-top: 2px; }
.picker { width: 138px; height: 237px; margin-left: 5px; background: linear-gradient(rgba(0,0,0,0), rgba(0,0,0,.5) 50%, #000), linear-gradient(90deg, #e4e4e4, #ff2a80 85%, #f62375); }
.picker svg { margin: 38px 0 0 85px; }
.marker { margin: 9px 7px 0 6px; }
.hue { width: 15px; height: 237px; margin-left: -5px; background: linear-gradient(#e81a0c 0%, #f0164b 6%, #ff40ff 17%, #0a20f0 31%, #00e5ff 50%, #00d21c 67%, #f6f62a 83%, #ff5a00 94%, #ff1500); }
.adjust { height: 79px; color: #eee; padding: 4px 6px 0; font-size: 7.800px; line-height: 10px; border-bottom: 2px solid #333; flex: none; }
.adjust svg { margin: -1px 0 0 19px; overflow: visible; }
.filter { height: 20px; flex: none; display: flex; align-items: center; gap: 26px; padding: 1px 0 0 3px; border-bottom: 1px solid #454545; }
.type { width: 79px; height: 13px; border: 1px solid #444; background: #5a5a5a; color: #aaa; display: flex; gap: 2px; line-height: 11px; padding: 0 3px; font-size: 8.500px; }
.sp { margin: 1px 0 0 auto; }
.blend, .lock { flex: none; display: flex; align-items: center; color: #eee; font-weight: 600; font-size: 7.800px; padding: 0 2px 0 4px; }
.blend { height: 20px; } .lock { height: 22px; }
.sel { width: 121px; height: 13px; background: #6a6a6a; border: 1px solid #333; line-height: 11px; padding: 0 3px 0 5px; display: flex; margin-right: 6px; }
.blend span { width: 32px; white-space: nowrap; letter-spacing: -.3px; }
.blend em, .lock em { margin-left: auto; width: 28px; height: 14px; background: #383838; text-align: center; line-height: 14px; }
.blend i, .lock i { width: 14px; height: 14px; background: #666; border: 1px solid #404040; text-align: center; line-height: 11px; font-size: 8px; }
.lock .dim { color: #666; margin-left: 4px; }
.lock > span:first-child { color: #aaa; width: 31px; font-weight: 400; white-space: nowrap; font-size: 8.300px; }
.lock .fond { margin-left: auto; }
.layerbox { flex: 1; display: flex; }
.layers { width: 200px; border-top: 1px solid #3a3a3a; background: linear-gradient(90deg, transparent 22px, #404040 22px 23px, transparent 23px) 0 0 / 100% 176px no-repeat; }
.lscroll { flex: 1; background: #464646; border-left: 1px solid #404040; }
.layer { display: flex; align-items: center; border-bottom: 1px solid #3d3d3d; color: #eee; font-weight: 600; font-size: 7.700px; letter-spacing: -.1px; }
.layer > s { width: 10px; height: 10px; border: 1px solid #404040; margin: 0 7px 0 6px; background: #555; }
.layer > svg { margin: 0 7px 0 6px; }
.layer > div { flex: 1; align-self: stretch; display: flex; align-items: center; padding-left: 4px; }
.layer q { border: 3.500px solid transparent; border-left: 5px solid #eee; border-right: 0; margin-right: 4px; }
.layer div span { margin-left: 9px; white-space: nowrap; }
.thumb { width: 24px; height: 18px; background: #fff; border: 1px solid #2e2e2e; margin-left: -1px; }
.checker { background: conic-gradient(#ccc 25%, #fff 0 50%, #ccc 0 75%, #fff 0) 0 0 / 6px 6px; }
.layer .thumb + span { margin-left: 7px; }
.layer strong { width: 22px; padding-left: 5px; font: bold 17px "Liberation Serif", serif; color: #d0d0d0; position: relative; }
.framed svg { position: absolute; left: -3px; top: -4px; }
.layer strong + span { margin-left: 8px; }
.h18 { height: 18px; } .h23 { height: 23.500px; } .h17 { height: 17.400px; } .h29 { height: 29.300px; }
.on > div { background: #67788f; }
.it { font-style: italic; }
.padlock { margin-left: auto; margin-right: 12px; }
.pfoot { height: 14px; background: #595959; padding-left: 58px; border-top: 1px solid #404040; }

.taskbar-in { height: 30px; flex: none; background: #1c1c1c; display: flex; }
.apps { display: flex; margin-left: .5px; }
.apps svg { width: 37px; height: 30px; padding: 5px 8.500px 5px; }
.apps .run { border-bottom: 1px solid #b0b0b0; }
.apps .act { background: #555; }
.apps .orange { background: #b8641c; }
.tray { margin-left: auto; margin-right: 7px; display: flex; color: #eee; font-size: 8.500px; align-items: center; }
.tray span { margin: 0 11px 0 9px; }
.tray p { text-align: center; line-height: 13.500px; }
.shade { position: absolute; left: 0; top: 658px; width: 1449px; height: 158px; background: linear-gradient(rgba(0,0,0,0), rgba(0,0,0,.29) 50%, rgba(0,0,0,.5)); }

.filmstrip { position: relative; flex: 1; padding: 19px 0 0 6px; background:
  linear-gradient(#2b2b2d, rgba(45,42,46,.5) 45px, transparent 90px) 0 0 / 100% 90px no-repeat,
  radial-gradient(ellipse 60px 190px at 28px 125px, rgba(180,130,160,.6), transparent),
  radial-gradient(ellipse 95px 210px at 78px 110px, rgba(180,72,130,.85), rgba(150,50,105,.68) 45%, transparent),
  linear-gradient(#403c40 0, #5e4a56 100px, #563c4b 200px, #44283a 280px, #442e3b 330px, #4a4648 390px, #4d4d50 480px, #505154 640px, #47484b 730px, #222225 816px); }
.tile { position: relative; width: 120px; height: 120px; background: #000; border-radius: 4px; display: flex; align-items: center; justify-content: center; fill: #fff; }
.tile.small { height: 68px; }
.tiles { display: flex; flex-direction: column; gap: 4px; margin-top: 260px; }
.active { box-shadow: 0 0 0 3px #2356aa; }
.av { width: 60px; height: 60px; border-radius: 50%; font: 31px/60px "Liberation Sans", sans-serif; text-align: center; color: rgba(255,255,255,.62); -webkit-text-stroke: .4px; }
.small .av { width: 34px; height: 34px; font-size: 18px; line-height: 34px; }
.green { background: #2b5e50; } .small .green { background: #244e42; } .plum { background: #5d2b3e; }
.more { position: absolute; left: 3px; bottom: 7px; }
.badges { position: absolute; right: 9px; bottom: 4px; display: flex; gap: 4px; }
.small .badges { bottom: 5px; }
.speaker { position: absolute; left: 5px; top: 5px; width: 22px; height: 22px; border-radius: 50%; background: #1558c8; border: 2px solid #fff; padding: 4.500px; }
.speaker svg { width: 9px; height: 9px; }
.next { position: absolute; left: 126px; top: 722px; }

.watermark { position: absolute; left: 25px; top: 31px; display: flex; color: #bdbdbd; }
.watermark span { font: 300 29px/33px Lato, sans-serif; letter-spacing: 1.200px; }
.subject { position: absolute; left: 597px; top: 25px; display: flex; gap: 17px; color: #fff; font-family: "Liberation Sans", sans-serif; }
.subject h1 { width: 328px; font-size: 17px; font-weight: 400; line-height: 26px; white-space: nowrap; -webkit-text-stroke: .2px; }
.subject time { display: block; margin-top: 2px; width: 328px; padding-left: 64px; text-align: center; font-size: 15px; line-height: 22px; color: #b0b0b0; }
.count { width: 47px; height: 28px; background: #fff; border-radius: 4px; color: #5e6d7f; display: flex; align-items: center; justify-content: center; gap: 9px; font-size: 13px; }
.self { position: absolute; left: 1403px; top: 30px; width: 40px; height: 40px; border-radius: 50%; background: #78849a; color: #b9bec8; font: bold 13px/38px "Liberation Sans", sans-serif; text-align: center; }

.toolbox { position: absolute; left: 0; top: 755px; width: 1593px; height: 40px; display: flex; align-items: center; justify-content: space-between; padding: 0 35px 0 27px; }
.group { display: flex; align-items: center; }
.left { gap: 34.500px; width: 681px; }
.hand { margin-left: 2px; }
.mid { gap: 25px; width: 650px; }
.btn { position: relative; width: 40px; height: 40px; border-radius: 50%; display: flex; align-items: center; justify-content: center; }
.white { background: #fff; } .red { background: #c5211a; } .dark { background: #253547; border: 1px solid #56606c; }
.chev { position: absolute; left: 30px; top: 22px; background: #fff; border-radius: 50%; box-shadow: 0 0 0 .5px #889; }
.dark .chev { left: 29px; }
.end { gap: 36px; margin-left: auto; }
.end .shield { margin-left: -2px; }
.end svg:last-child { margin-left: 1px; }

.taskbar { height: 17px; flex: none; overflow: hidden; display: flex; align-items: flex-start; background: #28203c; color: #fff; }
.start { width: 41px; padding: 12px 0 0 8px; }
.search { width: 344px; height: 50px; background: #31506a; border: 1px solid #6d8090; display: flex; gap: 17px; padding: 11px 0 0 15px; font-size: 13px; line-height: 17px; color: #ddd; }
.icons { display: flex; }
.icons svg { width: 49.150px; height: 32px; padding: 8px 12px 0; }
.icons .cur { background: #1c447a; }
.tray2 { margin-left: auto; display: flex; padding: 0 25px 0 0; }
.tray2 span { font-size: 11px; line-height: 21px; margin: 0 37px 0 22px; font-family: "Noto Sans", sans-serif; }
.tray2 svg:last-child { margin-top: 5px; }
```
